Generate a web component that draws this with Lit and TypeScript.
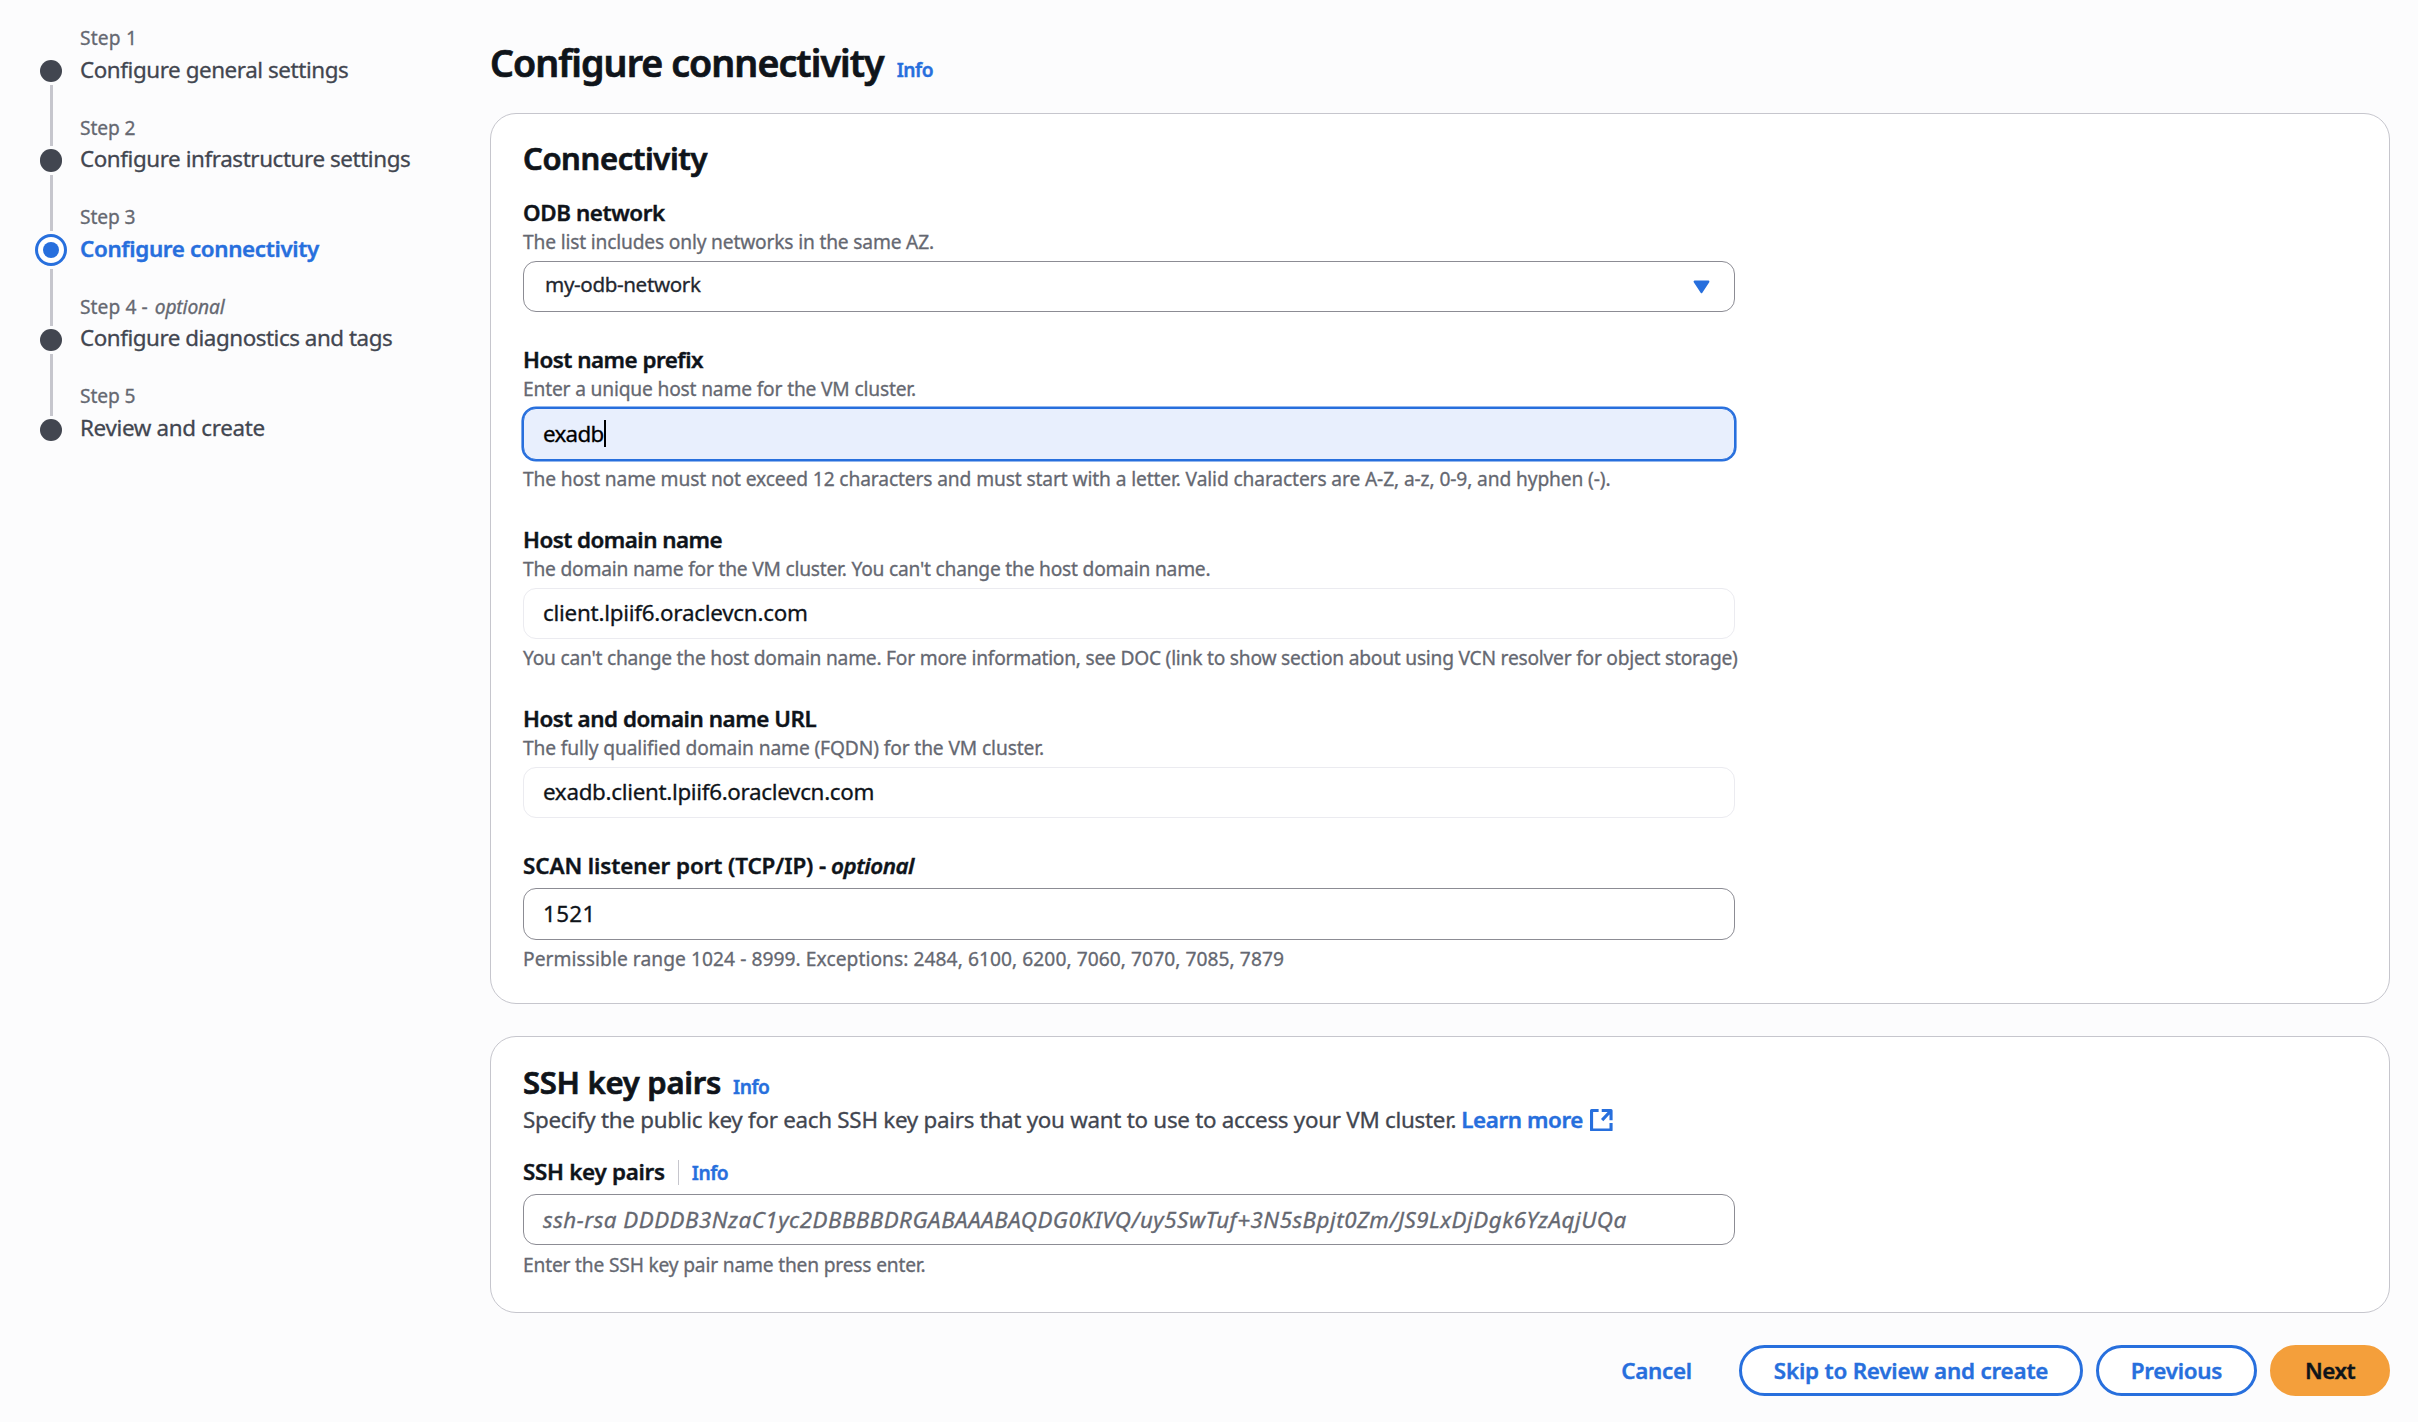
import { LitElement, html, css, svg, nothing, TemplateResult } from "lit";
import { customElement } from "lit/decorators.js";

type Kind = "body" | "small" | "option" | "strong" | "info" | "h1" | "h2" | "placeholder" | "em" | "emStrong";

const FAMILY = `"Noto Sans", "Open Sans", sans-serif`;
const FONTS: Record<Kind, string> = {
  body: `400 22.4px ${FAMILY}`,
  small: `400 19.2px ${FAMILY}`,
  option: `400 20.6px ${FAMILY}`,
  strong: `600 22.4px ${FAMILY}`,
  info: `600 19.2px ${FAMILY}`,
  h1: `600 37.6px ${FAMILY}`,
  h2: `600 31px ${FAMILY}`,
  placeholder: `italic 400 22.4px ${FAMILY}`,
  em: `italic 400 19.2px ${FAMILY}`,
  emStrong: `italic 600 22.4px ${FAMILY}`,
};

const measure = document.createElement("canvas").getContext("2d")!;

/** Run of text tracked so that its ink spans the given width. */
function run(text: string, kind: Kind, width: number): TemplateResult {
  measure.font = FONTS[kind];
  const m = measure.measureText(text);
  const ink = m.actualBoundingBoxRight + m.actualBoundingBoxLeft;
  const tracking = ((width - ink) / (text.length - 1)).toFixed(3);
  return html`<span class="t ${kind}" style="letter-spacing:${tracking}px">${text}</span>`;
}

interface Step { label: [string, number]; title: [string, number]; active?: boolean; optional?: boolean }

const STEPS: Step[] = [
  { label: ["Step 1", 53], title: ["Configure general settings", 267] },
  { label: ["Step 2", 54.5], title: ["Configure infrastructure settings", 329] },
  { label: ["Step 3", 54.5], title: ["Configure connectivity", 239], active: true },
  { label: ["Step 4 -", 67.5], title: ["Configure diagnostics and tags", 311], optional: true },
  { label: ["Step 5", 54.5], title: ["Review and create", 182.5] },
];

const text = css`
  .t { white-space: pre; -webkit-text-stroke: 0.3px currentColor; }
  .body { font-size: 22.4px; line-height: 32px; }
  .small, .em { font-size: 19.2px; line-height: 25.6px; }
  .em, .emStrong, .placeholder { font-style: italic; }
  .option { font-size: 20.6px; line-height: 32px; }
  .strong, .emStrong { font-size: 22.4px; line-height: 32px; font-weight: 600; }
  .info { font-size: 19.2px; line-height: 25.6px; font-weight: 600; color: #276fdd; }
  .h1 { font-size: 37.6px; line-height: 48px; font-weight: 600; }
  .h2 { font-size: 31px; line-height: 38.4px; font-weight: 600; }
  .h1, .h2 { -webkit-text-stroke-width: 0.7px; }
  .strong, .emStrong, .info { -webkit-text-stroke-width: 0.4px; }
  .placeholder { font-size: 22.4px; line-height: 32px; color: #656871; }
`;

@customElement("wizard-steps")
export class WizardSteps extends LitElement {
  static styles = [text, css`
    :host { display: flex; gap: 13px; padding: 25px 0 0 35px; box-sizing: border-box; }
    .rail { display: flex; flex-direction: column; margin-top: 1.2px; width: 32px; }
    .node { height: 89.7px; display: flex; flex-direction: column; align-items: center; gap: 3px; }
    .line { flex: 1; width: 3px; background: #c6c6cd; }
    .node:first-child .line:first-child, .node:last-child .line:last-child { background: none; }
    .dot { width: 22.5px; height: 22.5px; border-radius: 50%; background: #424650; }
    .ring { width: 32px; height: 32px; box-sizing: border-box; border: 3px solid #276fdd; border-radius: 50%;
      display: flex; align-items: center; justify-content: center; background: #fff; }
    .core { width: 16px; height: 16px; border-radius: 50%; background: #276fdd; }
    .list { display: flex; flex-direction: column; }
    .step { height: 89.5px; display: flex; flex-direction: column; gap: 3px; color: #424650; }
    .label { display: flex; gap: 7px; color: #656871; height: 25.6px; }
    .title { display: flex; }
    .active { color: #276fdd; }
  `];
  render() {
    return html`
      <div class="rail">${STEPS.map(s => html`<div class="node">
        <div class="line"></div>
        ${s.active ? html`<div class="ring"><div class="core"></div></div>` : html`<div class="dot"></div>`}
        <div class="line"></div>
      </div>`)}</div>
      <div class="list">${STEPS.map(s => html`<div class="step">
        <div class="label">${run(s.label[0], "small", s.label[1])}${s.optional ? run("optional", "em", 71) : nothing}</div>
        <div class="title ${s.active ? "active" : ""}">${run(s.title[0], s.active ? "strong" : "body", s.title[1])}</div>
      </div>`)}</div>`;
  }
}

const caretDown = svg`<svg class="arrow" width="17" height="14" viewBox="0 0 17 14"><path d="M1.6 1.6h13.8L8.5 12.2z" fill="#276fdd" stroke="#276fdd" stroke-width="2" stroke-linejoin="round"/></svg>`;
const external = svg`<svg class="ext" width="22.6" height="22.6" viewBox="0 0 16 16"><path d="M6.1 1.1H1.1v13.8h13.8v-4.9M8.3 1.1h6.6V8M14.6 1.4 8.6 7.9" fill="none" stroke="#276fdd" stroke-width="2.2" stroke-linejoin="round"/></svg>`;

interface Field {
  label: [string, number];
  optional?: boolean;
  info?: boolean;
  description?: [string, number];
  value: [string, number];
  look: "select" | "focus" | "readonly" | "plain" | "hint";
  constraint?: [string, number];
}

const CONNECTIVITY: Field[] = [
  { label: ["ODB network", 142], description: ["The list includes only networks in the same AZ.", 410], value: ["my-odb-network", 155], look: "select" },
  { label: ["Host name prefix", 179], description: ["Enter a unique host name for the VM cluster.", 391], value: ["exadb", 59.5], look: "focus",
    constraint: ["The host name must not exceed 12 characters and must start with a letter. Valid characters are A-Z, a-z, 0-9, and hyphen (-).", 1086.5] },
  { label: ["Host domain name", 197.5], description: ["The domain name for the VM cluster. You can't change the host domain name.", 686.5], value: ["client.lpiif6.oraclevcn.com", 263], look: "readonly",
    constraint: ["You can't change the host domain name. For more information, see DOC (link to show section about using VCN resolver for object storage)", 1214] },
  { label: ["Host and domain name URL", 291.5], description: ["The fully qualified domain name (FQDN) for the VM cluster.", 520], value: ["exadb.client.lpiif6.oraclevcn.com", 329.5], look: "readonly" },
  { label: ["SCAN listener port (TCP/IP) -", 302], optional: true, value: ["1521", 45.5], look: "plain",
    constraint: ["Permissible range 1024 - 8999. Exceptions: 2484, 6100, 6200, 7060, 7070, 7085, 7879", 759] },
];

const SSH: Field = {
  label: ["SSH key pairs", 141], info: true, look: "hint",
  value: ["ssh-rsa DDDDB3NzaC1yc2DBBBBDRGABAAABAQDG0KIVQ/uy5SwTuf+3N5sBpjt0Zm/JS9LxDjDgk6YzAqjUQa", 1083.5],
  constraint: ["Enter the SSH key pair name then press enter.", 400.5],
};

@customElement("app-root")
export class AppRoot extends LitElement {
  static styles = [text, css`
    :host { display: flex; min-height: 1422px; background: #fcfcfd; color: #0f141a;
      font-family: "Noto Sans", "Open Sans", sans-serif; font-size: 22.4px; }
    wizard-steps { flex: none; width: 490px; }
    main { width: 1900px; display: flex; flex-direction: column; }
    .head { display: flex; align-items: baseline; gap: 13px; padding-top: 38.6px; height: 48px; margin-bottom: 26.4px; }
    .card { box-sizing: border-box; border: 1px solid #c6c6cd; border-radius: 26px; background: #fff; padding: 25px 32px 0; }
    .first { height: 891px; margin-bottom: 32px; }
    .second { height: 277px; margin-bottom: 32px; padding-top: 26.2px; }
    .cardhead { display: flex; align-items: baseline; gap: 12px; height: 38.4px; }
    .fields { display: flex; flex-direction: column; gap: 32px; margin-top: 19.6px; }
    .lead { display: flex; align-items: center; height: 32px; margin-top: 2.5px; color: #424650; }
    .link { display: flex; align-items: center; gap: 7px; margin-left: 5px; color: #276fdd; }
    .field { display: flex; flex-direction: column; width: 1212px; }
    .label { display: flex; gap: 5px; height: 32px; align-items: baseline; }
    .label .info { border-left: 1px solid #c6c6cd; padding-left: 13px; margin-left: 8px; }
    .desc { display: flex; height: 25.6px; color: #656871; }
    .constraint { display: flex; height: 25.6px; margin-top: 6.4px; color: #656871; }
    .box { box-sizing: border-box; height: 51.3px; margin-top: 6.4px; border: 1px solid #8c8c94; border-radius: 13px;
      background: #fff; display: flex; align-items: center; padding: 0 19px; }
    .select { justify-content: space-between; padding: 0 24px 0 21px; color: #23272f; }
    .select .option { padding-bottom: 6px; }
    .focus { border-color: #276fdd; background: #e8effd; box-shadow: 0 0 0 1.6px #276fdd; color: #000; }
    .caret { width: 2px; height: 27px; background: #000; margin-bottom: 1px; }
    .readonly { border-color: #ebebf0; }
    .actions { display: flex; justify-content: flex-end; gap: 13px; }
    .btn { box-sizing: border-box; height: 51px; border: 3px solid #276fdd; border-radius: 26px; background: #fff; color: #276fdd;
      display: flex; align-items: center; justify-content: center; padding-top: 2px; }
    .cancel { border-color: transparent; background: none; width: 139px; }
    .skip { width: 344px; }
    .previous { width: 161px; }
    .next { width: 120px; background: #f49f3b; border-color: #f49f3b; color: #0f141a; }
  `];

  private field(f: Field) {
    return html`<div class="field">
      <div class="label">${run(f.label[0], "strong", f.label[1])}${f.optional ? run("optional", "emStrong", 83) : nothing}${f.info ? run("Info", "info", 36) : nothing}</div>
      ${f.description ? html`<div class="desc">${run(f.description[0], "small", f.description[1])}</div>` : nothing}
      <div class="box ${f.look}">
        ${run(f.value[0], f.look === "select" ? "option" : f.look === "hint" ? "placeholder" : "body", f.value[1])}
        ${f.look === "focus" ? html`<span class="caret"></span>` : nothing}
        ${f.look === "select" ? caretDown : nothing}
      </div>
      ${f.constraint ? html`<div class="constraint">${run(f.constraint[0], "small", f.constraint[1])}</div>` : nothing}
    </div>`;
  }

  render() {
    return html`
      <wizard-steps></wizard-steps>
      <main>
        <div class="head">${run("Configure connectivity", "h1", 393)}${run("Info", "info", 36)}</div>
        <section class="card first">
          <div class="cardhead">${run("Connectivity", "h2", 183.5)}</div>
          <div class="fields">${CONNECTIVITY.map(f => this.field(f))}</div>
        </section>
        <section class="card second">
          <div class="cardhead">${run("SSH key pairs", "h2", 196)}${run("Info", "info", 36)}</div>
          <div class="lead">
            ${run("Specify the public key for each SSH key pairs that you want to use to access your VM cluster.", "body", 931.5)}
            <span class="link">${run("Learn more", "strong", 120)}${external}</span>
          </div>
          <div class="fields">${this.field(SSH)}</div>
        </section>
        <div class="actions">
          <div class="btn cancel">${run("Cancel", "strong", 68.5)}</div>
          <div class="btn skip">${run("Skip to Review and create", "strong", 273.5)}</div>
          <div class="btn previous">${run("Previous", "strong", 89.5)}</div>
          <div class="btn next">${run("Next", "strong", 48.5)}</div>
        </div>
      </main>`;
  }
}
